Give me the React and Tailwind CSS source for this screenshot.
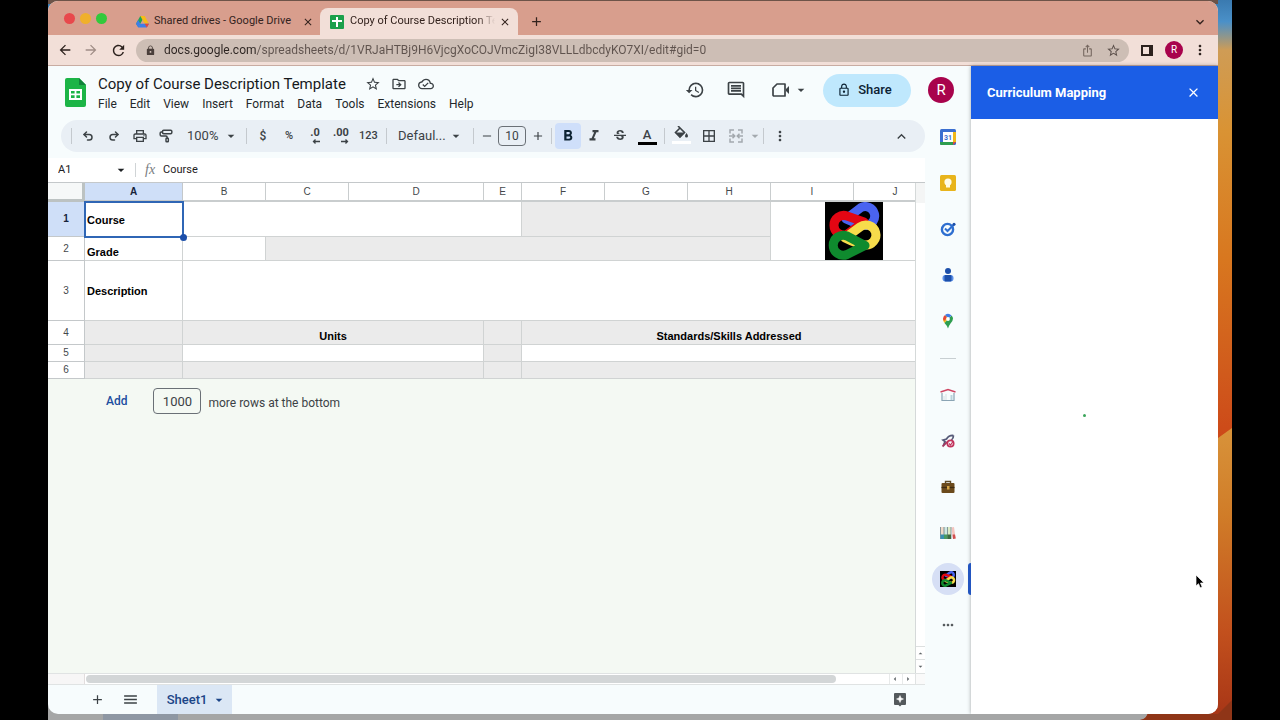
import React from 'react';
import {
    MdAdd, MdArrowBack, MdArrowDropDown, MdArrowForward, MdBorderAll, MdClose, MdFormatBold,
    MdFormatItalic, MdHistory, MdIosShare, MdKeyboardArrowDown, MdKeyboardArrowUp, MdLock, MdMenu,
    MdMoreHoriz, MdMoreVert, MdOutlineCloudDone, MdOutlineComment, MdOutlineDriveFileMove,
    MdOutlineLock, MdOutlinePrint, MdRefresh, MdRemove, MdStarBorder, MdStrikethroughS,
} from 'react-icons/md';
import { PaintRoller, Redo2, Undo2 } from 'lucide-react';

const menus = ['File', 'Edit', 'View', 'Insert', 'Format', 'Data', 'Tools', 'Extensions', 'Help'];

const columns = [
    { name: 'A', width: 'w-[98px]' },
    { name: 'B', width: 'w-[83px]' },
    { name: 'C', width: 'w-[83px]' },
    { name: 'D', width: 'w-[135px]' },
    { name: 'E', width: 'w-[38px]' },
    { name: 'F', width: 'w-[83px]' },
    { name: 'G', width: 'w-[83px]' },
    { name: 'H', width: 'w-[83px]' },
    { name: 'I', width: 'w-[83px]' },
    { name: 'J', width: 'w-[83px]' },
];

const Wallpaper = () => (
    <svg className="absolute inset-0 h-full w-full" viewBox="0 0 1184 720" preserveAspectRatio="none" aria-hidden="true">
        <defs>
            <linearGradient id="sky" x1="0" y1="0" x2="0" y2="1">
                <stop offset="0" stopColor="#3a7ab0" />
                <stop offset="0.03" stopColor="#4a90c8" />
                <stop offset="0.07" stopColor="#cf9c55" />
                <stop offset="0.18" stopColor="#d99334" />
                <stop offset="0.36" stopColor="#d8771f" />
                <stop offset="0.52" stopColor="#d05a1c" />
                <stop offset="0.62" stopColor="#cc4618" />
            </linearGradient>
            <linearGradient id="dune" x1="0" y1="0" x2="0" y2="1">
                <stop offset="0" stopColor="#d8933a" />
                <stop offset="0.3" stopColor="#d07c28" />
                <stop offset="0.7" stopColor="#c2501d" />
                <stop offset="1" stopColor="#a63416" />
            </linearGradient>
        </defs>
        <rect width="1184" height="720" fill="url(#sky)" />
        <path d="M0 430L1170 438L1184 428V720H0z" fill="url(#dune)" />
        <rect width="1170" height="4" fill="#6d5348" />
        <path d="M0 700H1100V711Q1099 720 1092 720H0z" fill="#a5a6a6" />
        <rect x="55" y="714" width="75" height="6" fill="#8e97a3" />
        <path d="M1100 714H1170L1184 700V720H1092Q1098 719 1100 714z" fill="#8f3517" />
    </svg>
);

// Four interlocking teardrops, drawn back to front
const LoopsLogo = ({ className }) => (
    <svg viewBox="0 0 58 58" className={className} role="img" aria-label="Curriculum Mapping logo">
        <rect width="58" height="58" fill="#000" />
        <g fill="none" strokeWidth="9" strokeLinejoin="round">
            <path d="M21 17L36 5.500A9.500 9.500 0 1 1 41 23.500Q36 24 21 17z" stroke="#4a63f0" />
            <path d="M39 20L22 14A9.800 9.800 0 1 0 22 32.500z" stroke="#e30613" />
            <path d="M20 36L35 25A10 10 0 1 1 40 43Q34 43 20 36z" stroke="#f7dc4b" />
            <path d="M40 43.500L22 34A10 10 0 1 0 22 52.500z" stroke="#0f8a2e" />
        </g>
    </svg>
);

const SheetsLogo = ({ className }) => (
    <svg viewBox="0 0 21 29" className={className} aria-hidden="true">
        <path d="M2 0H14L21 7V27Q21 29 19 29H2Q0 29 0 27V2Q0 0 2 0z" fill="#1cb446" />
        <path d="M14 0L21 7H14z" fill="#11823a" />
        <path d="M4 11H17V22H4zM6 13V15.500H9.600V13zM11.400 13V15.500H15V13zM6 17.300V20H9.600V17.300zM11.400 17.300V20H15V17.300z" fill="#fff" fillRule="evenodd" />
    </svg>
);

const SheetsFavicon = () => (
    <svg viewBox="0 0 14 14" className="size-[14px] shrink-0" aria-hidden="true">
        <rect width="14" height="14" rx="1" fill="#1ba04b" />
        <path d="M6 2H8V5H12V7H8V12H6V7H2V5H6z" fill="#fff" />
    </svg>
);

const DriveFavicon = () => (
    <svg viewBox="0 0 24 22" className="h-3 w-[13px] shrink-0" aria-hidden="true">
        <path d="M8 0H16L12 7L4.500 20.500L0 14z" fill="#22a25a" />
        <path d="M8 0H16L24 14H16z" fill="#f7bc16" />
        <path d="M8 14H24L20 21H4z" fill="#3f7de8" />
        <path d="M16 14H24L20 21z" fill="#e5483a" />
        <path d="M0 14L4 21L8 14L4 7.500z" fill="#3f7de8" />
    </svg>
);

const VideoIcon = () => (
    <svg viewBox="0 0 18 16" className="h-4 w-[18px]" fill="none" aria-hidden="true">
        <path d="M5 2H13V14H2Q1 14 1 13V6z" stroke="#3c4246" strokeWidth="1.700" strokeLinejoin="round" />
        <path d="M14 7L17 4V12L14 9z" fill="#3c4246" />
    </svg>
);

const FillIcon = () => (
    <svg viewBox="0 0 20 20" className="size-5" aria-hidden="true">
        <path d="M6 0L12.500 6.500L8 11L3.500 6.500L8 2" fill="none" stroke="#3c4246" strokeWidth="1.600" />
        <path d="M3.500 6.500H12.500L8 11z" fill="#3c4246" />
        <path d="M14.500 7Q16 9 16 10A1.500 1.500 0 0 1 13 10Q13 9 14.500 7z" fill="#3c4246" />
        <rect y="15" width="19" height="3" fill="#fff" />
    </svg>
);

const MergeIcon = () => (
    <svg viewBox="0 0 14 14" className="size-[14px]" fill="none" stroke="#a3a9ae" strokeWidth="1.500" aria-hidden="true">
        <path d="M5 1H1V4.500M9 1H13V4.500M5 13H1V9.500M9 13H13V9.500" />
        <path d="M0 7H5.500M3.500 4.800L5.700 7L3.500 9.200M14 7H8.500M10.500 4.800L8.300 7L10.500 9.200" />
    </svg>
);

// Decimal buttons share the digits, only the arrow direction changes
const DecimalIcon = ({ digits, right }) => (
    <span className="flex flex-col items-end">
        <span className="text-[11px] leading-[10px] font-bold">{digits}</span>
        <svg viewBox="0 0 8 5" className={right ? 'mt-px h-[5px] w-2 -scale-x-100' : 'mt-px h-[5px] w-2'} aria-hidden="true">
            <path d="M8 2.500H1.500M3.500 0.500L1.500 2.500L3.500 4.500" fill="none" stroke="#3c4246" strokeWidth="1.300" />
        </svg>
    </span>
);

const CalendarIcon = () => (
    <svg viewBox="0 0 16 16" className="size-4" aria-hidden="true">
        <rect width="16" height="16" rx="1.500" fill="#3b6fd0" />
        <rect x="13" y="3" width="3" height="10" fill="#efb81a" />
        <path d="M0 13H13V16H1.500Q0 16 0 14.500z" fill="#2f9e4f" />
        <path d="M13 13H16L13 16z" fill="#e04a3a" />
        <rect x="3" y="3" width="10" height="10" fill="#fff" />
        <text x="8" y="10.500" textAnchor="middle" fontSize="7" fontWeight="bold" fontFamily="Roboto, sans-serif" fill="#3b6fd0">31</text>
    </svg>
);

const KeepIcon = () => (
    <svg viewBox="0 0 16 16" className="size-4" aria-hidden="true">
        <rect width="16" height="16" rx="1.500" fill="#e8b41c" />
        <circle cx="8" cy="7" r="3.600" fill="#fffbe8" />
        <rect x="6" y="10" width="4" height="2.500" fill="#fffbe8" />
    </svg>
);

const TasksIcon = () => (
    <svg viewBox="0 0 16 16" className="size-4" fill="none" aria-hidden="true">
        <circle cx="7.500" cy="8.500" r="5.600" stroke="#2f6fd0" strokeWidth="2.400" />
        <path d="M5 7.500L7.500 10L14 3.500" stroke="#2f6fd0" strokeWidth="2" />
        <circle cx="14" cy="3.200" r="1.500" fill="#1c4faa" />
    </svg>
);

const ContactsIcon = () => (
    <svg viewBox="0 0 16 16" className="size-4" aria-hidden="true">
        <circle cx="8" cy="4" r="3" fill="#1c4faa" />
        <rect x="2.500" y="8" width="11" height="6.500" rx="3" fill="#5b8fe8" />
        <rect x="4.500" y="8" width="7" height="6.500" rx="1" fill="#1c4faa" />
    </svg>
);

const MapsIcon = () => (
    <svg viewBox="0 0 16 16" className="size-4" aria-hidden="true">
        <path d="M3 6Q3 8 4.500 10L10 4L6 2z" fill="#f2b81c" />
        <path d="M13 5.500Q13 8 10.500 10.500Q9 12.500 8 15.500Q7 12.500 4.500 10L11.500 2.500Q13 4 13 5.500z" fill="#2f9e4f" />
        <path d="M3 6A5 5 0 0 1 5 2L7 5L4 8z" fill="#e5483a" />
        <path d="M5 2A5 5 0 0 1 11.500 2.500L8.500 5.500z" fill="#3f7de8" />
        <circle cx="8" cy="6" r="1.900" fill="#fff" />
    </svg>
);

const ClassroomIcon = () => (
    <svg viewBox="0 0 16 16" className="size-4" fill="none" aria-hidden="true">
        <path d="M2 6V13.500H14V6" stroke="#8aa4b4" strokeWidth="1.200" />
        <path d="M6 13V7M4 13V9" stroke="#d8e0e4" />
        <path d="M0.500 5L8 2.500L15.500 5" stroke="#cf4562" strokeWidth="1.500" />
        <path d="M11.500 8V13" stroke="#b9d4dc" strokeWidth="2" />
    </svg>
);

const RocketIcon = () => (
    <svg viewBox="0 0 16 16" className="size-4" fill="none" aria-hidden="true">
        <path d="M13.500 2.500Q9 2 6.500 6L3 7L5 8.500L3.500 12M13.500 2.500Q13.500 5 11.500 7" stroke="#565a78" strokeWidth="1.700" />
        <path d="M2.500 13.500L7 9" stroke="#a03a62" strokeWidth="1.800" />
        <circle cx="10.500" cy="10.500" r="3.200" stroke="#c2335c" strokeWidth="1.700" />
        <path d="M9 10.500L10.500 12L13 8.500" stroke="#c2335c" strokeWidth="1.200" />
    </svg>
);

const BriefcaseIcon = () => (
    <svg viewBox="0 0 16 16" className="size-4" aria-hidden="true">
        <path d="M5.500 4V2.500H10.500V4" fill="none" stroke="#5f4a26" strokeWidth="1.400" />
        <rect x="1.500" y="4" width="13" height="10" rx="1" fill="#6b4a1c" />
        <path d="M1.500 8.500H14.500" stroke="#3e2a10" strokeWidth="1.200" />
        <rect x="7" y="7" width="2.500" height="3.500" fill="#d6a544" />
    </svg>
);

const BindersIcon = () => (
    <svg viewBox="0 0 16 16" className="size-4" aria-hidden="true">
        <rect x="0.500" y="2" width="3.500" height="12" fill="#f0d9c8" />
        <rect x="4" y="2" width="3.500" height="12" fill="#cfe8e2" />
        <rect x="7.500" y="2" width="3.500" height="12" fill="#dcebc4" />
        <path d="M11.500 2.500L14 2L15.700 13.500L13 14z" fill="#f4c4be" />
        <path d="M0.500 2V14M4 2V14M7.500 2V14M11 2V14" stroke="#6a7f88" strokeWidth="0.800" />
        <path d="M0.500 9.500H4V14H0.500z" fill="#3a8fb0" />
        <path d="M4 9.500H7.500V14H4z" fill="#4a9a60" />
        <path d="M7.500 9.500H11V14H7.500z" fill="#3d6a3f" />
        <path d="M12.500 9.500H15L15.700 13.500L13 14z" fill="#d05050" />
    </svg>
);

const ExploreIcon = () => (
    <svg viewBox="0 0 12 14" className="h-[14px] w-3" aria-hidden="true">
        <path d="M1 0H11Q12 0 12 1V11Q12 12 11 12H7.500L6 13.500L4.500 12H1Q0 12 0 11V1Q0 0 1 0z" fill="#54595c" />
        <path d="M6 2.500L7 5L9.500 6L7 7L6 9.500L5 7L2.500 6L5 5z" fill="#fff" stroke="#fff" strokeWidth="0.500" />
    </svg>
);

const googleApps = [
    { label: 'Calendar', icon: CalendarIcon },
    { label: 'Keep', icon: KeepIcon },
    { label: 'Tasks', icon: TasksIcon },
    { label: 'Contacts', icon: ContactsIcon },
    { label: 'Maps', icon: MapsIcon },
];

const addOns = [
    { label: 'Classroom', icon: ClassroomIcon },
    { label: 'Launch', icon: RocketIcon },
    { label: 'Briefcase', icon: BriefcaseIcon },
    { label: 'Binders', icon: BindersIcon },
];

const Tool = ({ label, className = 'w-[26px]', children }) => (
    <button type="button" aria-label={label} className={`flex h-[26px] shrink-0 items-center justify-center rounded ${className}`}>
        {children}
    </button>
);

const Divider = () => <span className="mx-[3px] h-4 w-px shrink-0 bg-[#c4c9ce]" />;

const BrowserTabs = () => (
    <div className="flex h-[34px] shrink-0 items-end bg-[#d89e8d] text-[11px] text-[#33221d]">
        <div className="flex h-[34px] w-[88px] items-center gap-[5px] pl-4">
            <span className="size-[11px] rounded-full bg-[#e8484c]" />
            <span className="size-[11px] rounded-full bg-[#f0b02c]" />
            <span className="size-[11px] rounded-full bg-[#32c93c]" />
        </div>
        <div className="flex h-[27px] w-[184px] items-center pr-[6px]">
            <DriveFavicon />
            <span className="ml-[5px] flex-1 truncate">Shared drives - Google Drive</span>
            <button type="button" aria-label="Close Shared drives tab"><MdClose size={12} /></button>
        </div>
        <div className="flex h-[27px] w-[198px] items-center rounded-t-lg bg-[#f2dfd8] pr-[7px] pl-[10px]">
            <SheetsFavicon />
            <span className="ml-[6px] flex-1 overflow-hidden whitespace-nowrap [mask-image:linear-gradient(to_right,#000_88%,transparent)]">
                Copy of Course Description Template
            </span>
            <button type="button" aria-label="Close Course Description tab" className="ml-1"><MdClose size={12} /></button>
        </div>
        <button type="button" aria-label="New tab" className="flex h-[27px] w-9 items-center justify-center"><MdAdd size={15} /></button>
        <button type="button" aria-label="Search tabs" className="mr-[10px] ml-auto flex h-[27px] items-center"><MdKeyboardArrowDown size={16} /></button>
    </div>
);

const AddressBar = () => (
    <div className="flex h-[31px] shrink-0 items-center border-b border-[#c8aca2] bg-[#f2dfd8] text-[#2c211d]">
        <button type="button" aria-label="Back" className="ml-[9px]"><MdArrowBack size={16} /></button>
        <button type="button" aria-label="Forward" className="ml-[10px] text-[#a08d86]"><MdArrowForward size={16} /></button>
        <button type="button" aria-label="Reload" className="ml-[11px]"><MdRefresh size={17} /></button>
        <label className="ml-[9px] flex h-[23px] flex-1 items-center gap-2 rounded-full bg-[#cdbeb5] pr-2 pl-[9px]">
            <MdLock size={11} className="text-[#4a3f3b]" />
            <input
                aria-label="Address"
                className="h-5 flex-1 bg-[linear-gradient(to_right,#2c2421_92px,#5f534e_92px)] bg-clip-text text-[12px] text-transparent outline-none"
                defaultValue="docs.google.com/spreadsheets/d/1VRJaHTBj9H6VjcgXoCOJVmcZigI38VLLLdbcdyKO7XI/edit#gid=0"
            />
            <MdIosShare size={13} className="text-[#75675f]" />
            <MdStarBorder size={15} className="ml-1 text-[#5c504b]" />
        </label>
        <button type="button" aria-label="Side panel" className="ml-3 h-[11px] w-3 border-2 border-r-4 border-[#2c211d]" />
        <button type="button" aria-label="Browser profile" className="ml-3 size-[18px] rounded-full bg-[#a8034c] text-[10px] leading-[18px] text-white">R</button>
        <button type="button" aria-label="Browser menu" className="mr-[10px] ml-[9px]"><MdMoreVert size={16} /></button>
    </div>
);

const DocHeader = () => (
    <header className="flex h-12 shrink-0 items-center pr-[17px] pl-[17px]">
        <SheetsLogo className="mt-[5px] h-[29px] w-[21px]" />
        <div className="ml-[5px] flex flex-col pt-[5px]">
            <div className="flex items-center text-[#3c4246]">
                <h1 className="pl-[7px] text-[15px] leading-[22px] text-[#16191c]">Copy of Course Description Template</h1>
                <button type="button" aria-label="Star" className="ml-[19px]"><MdStarBorder size={16} /></button>
                <button type="button" aria-label="Move" className="ml-[10px]"><MdOutlineDriveFileMove size={16} /></button>
                <button type="button" aria-label="Saved to Drive" className="ml-[11px]"><MdOutlineCloudDone size={16} /></button>
            </div>
            <nav className="flex text-[12px] leading-[18px] text-[#24282b]">
                {menus.map((menu) => (
                    <button key={menu} type="button" className="pr-[6px] pl-[7px]">{menu}</button>
                ))}
            </nav>
        </div>
        <div className="ml-auto flex items-center text-[#3c4246]">
            <button type="button" aria-label="Version history"><MdHistory size={20} /></button>
            <button type="button" aria-label="Comments" className="ml-[21px]"><MdOutlineComment size={20} /></button>
            <button type="button" aria-label="Meet" className="ml-[26px] flex items-center gap-[3px]">
                <VideoIcon />
                <MdArrowDropDown size={16} />
            </button>
            <button type="button" className="ml-[14px] flex h-[33px] w-[88px] items-center justify-center gap-[7px] rounded-full bg-[#bfe8fd] pr-[5px] text-[13px] font-medium text-[#0c2233]">
                <MdOutlineLock size={14} />
                Share
            </button>
            <button type="button" aria-label="Google account" className="ml-[17px] size-[26px] rounded-full bg-[#a8034c] text-[15px] text-white">R</button>
        </div>
    </header>
);

const Toolbar = () => (
    <div className="mt-[6px] ml-[13px] flex h-8 shrink-0 items-center rounded-full bg-[#e9eff5] pr-[11px] pl-[7px] text-[#3c4246]">
        <Divider />
        <Tool label="Undo"><Undo2 size={12} strokeWidth={3} /></Tool>
        <Tool label="Redo"><Redo2 size={12} strokeWidth={3} /></Tool>
        <Tool label="Print"><MdOutlinePrint size={16} /></Tool>
        <Tool label="Paint format"><PaintRoller size={14} strokeWidth={2.5} className="-scale-x-100" /></Tool>
        <label className="flex w-16 items-center pl-2">
            <select aria-label="Zoom" className="w-[36px] appearance-none text-[13px] outline-none">
                <option>100%</option>
            </select>
            <MdArrowDropDown size={16} />
        </label>
        <Divider />
        <Tool label="Currency"><span className="text-[12px] font-medium">$</span></Tool>
        <Tool label="Percent"><span className="text-[11px] font-medium">%</span></Tool>
        <Tool label="Decrease decimal places"><DecimalIcon digits=".0" /></Tool>
        <Tool label="Increase decimal places"><DecimalIcon digits=".00" right /></Tool>
        <Tool label="More formats" className="w-[29px]"><span className="text-[11px] font-medium">123</span></Tool>
        <Divider />
        <label className="flex w-20 items-center pl-2">
            <select aria-label="Font" className="w-[50px] appearance-none text-[13px] outline-none">
                <option>Defaul...</option>
            </select>
            <MdArrowDropDown size={16} />
        </label>
        <Divider />
        <Tool label="Decrease font size" className="w-5"><MdRemove size={14} /></Tool>
        <input aria-label="Font size" defaultValue="10" className="mx-px h-5 w-7 shrink-0 rounded border border-[#6a7076] text-center text-[12px] outline-none" />
        <Tool label="Increase font size" className="w-[21px]"><MdAdd size={14} /></Tool>
        <Divider />
        <Tool label="Bold" className="w-[26px] bg-[#cfdffa] text-[#0c2233]"><MdFormatBold size={18} /></Tool>
        <Tool label="Italic"><MdFormatItalic size={18} /></Tool>
        <Tool label="Strikethrough"><MdStrikethroughS size={16} /></Tool>
        <Tool label="Text color" className="w-7">
            <span className="w-[19px] border-b-3 border-black text-center text-[13px] leading-[14px] font-medium">A</span>
        </Tool>
        <Divider />
        <Tool label="Fill color" className="w-[27px]"><FillIcon /></Tool>
        <Tool label="Borders" className="w-[27px]"><MdBorderAll size={16} /></Tool>
        <Tool label="Merge cells" className="w-7"><MergeIcon /></Tool>
        <Tool label="Merge options" className="w-[10px] text-[#a3a9ae]"><MdArrowDropDown size={16} className="shrink-0" /></Tool>
        <Divider />
        <Tool label="More"><MdMoreVert size={16} /></Tool>
        <Tool label="Hide the menus" className="ml-auto w-[26px]"><MdKeyboardArrowUp size={17} /></Tool>
    </div>
);

const FormulaBar = () => (
    <div className="mt-[6px] flex h-[25px] shrink-0 items-center border-b border-[#c4c8ca] bg-white text-[11px] text-[#1d2023]">
        <input aria-label="Name box" defaultValue="A1" className="w-[65px] pl-[10px] outline-none" />
        <button type="button" aria-label="Named ranges"><MdArrowDropDown size={16} /></button>
        <span className="ml-[6px] h-[14px] w-px bg-[#d0d4d6]" />
        <label htmlFor="formula" className="ml-[9px] w-[14px] font-['Liberation_Serif',serif] text-[14px] leading-4 text-[#777c80] italic">fx</label>
        <input id="formula" defaultValue="Course" className="ml-1 flex-1 outline-none" />
    </div>
);

const Cell = ({ className = '', children, ...rest }) => (
    <td className={`border-r border-b border-[#d0d3d3] ${className}`} {...rest}>{children}</td>
);

const RowHead = ({ active, children }) => (
    <th
        scope="row"
        className={
            active
                ? 'border-r border-b border-[#c4c8ca] bg-[#cfdff8] text-[10px] font-bold text-[#16233a]'
                : 'border-r border-b border-[#c4c8ca] bg-white text-[10px] font-normal text-[#44484b]'
        }
    >
        {children}
    </th>
);

const Grid = () => (
    <table className="w-[889px] table-fixed border-separate border-spacing-0 bg-white font-['Liberation_Sans',Arial,sans-serif] text-[11px] leading-3">
        <thead>
            <tr className="h-[19px] text-[10px] text-[#44484b]">
                <th aria-label="Select all" className="w-[37px] border-r-3 border-b-3 border-[#bcc2c2] bg-[#f6f8f8]" />
                {columns.map((col) => (
                    <th
                        key={col.name}
                        scope="col"
                        className={
                            col.name === 'A'
                                ? `${col.width} border-r border-b-2 border-[#c4c8ca] bg-[#cfdff8] pt-px font-bold text-[#16233a]`
                                : `${col.width} border-r border-b-2 border-[#c9cdce] pt-px font-normal`
                        }
                    >
                        {col.name}
                    </th>
                ))}
            </tr>
        </thead>
        <tbody>
            <tr className="h-[35px]">
                <RowHead active>1</RowHead>
                <td className="relative pl-[2px] font-bold outline-2 -outline-offset-1 outline-[#2f66b5]">
                    Course
                    <span className="absolute -right-1 -bottom-1 size-[7px] rounded-full bg-[#1c4faa]" />
                </td>
                <Cell colSpan={4} />
                <Cell colSpan={3} className="bg-[#ebebeb]" />
                <Cell colSpan={2} rowSpan={2}>
                    <LoopsLogo className="mx-auto size-[58px]" />
                </Cell>
            </tr>
            <tr className="h-6">
                <RowHead>2</RowHead>
                <Cell className="pb-[2px] pl-[2px] align-bottom font-bold">Grade</Cell>
                <Cell />
                <Cell colSpan={6} className="bg-[#ebebeb]" />
            </tr>
            <tr className="h-[60px]">
                <RowHead>3</RowHead>
                <Cell className="pl-[2px] font-bold">Description</Cell>
                <Cell colSpan={9} />
            </tr>
            <tr className="h-6 bg-[#ebebeb]">
                <RowHead>4</RowHead>
                <Cell />
                <Cell colSpan={3} className="pb-[2px] text-center align-bottom font-bold">Units</Cell>
                <Cell />
                <Cell colSpan={5} className="pb-[2px] text-center align-bottom font-bold">Standards/Skills Addressed</Cell>
            </tr>
            <tr className="h-[17px]">
                <RowHead>5</RowHead>
                <Cell className="bg-[#ebebeb]" />
                <Cell colSpan={3} />
                <Cell className="bg-[#ebebeb]" />
                <Cell colSpan={5} />
            </tr>
            <tr className="h-[17px] bg-[#ebebeb]">
                <RowHead>6</RowHead>
                <Cell />
                <Cell colSpan={3} />
                <Cell />
                <Cell colSpan={5} />
            </tr>
        </tbody>
    </table>
);

const SheetArea = () => (
    <div className="flex min-h-0 flex-1 flex-col bg-white">
        <div className="flex min-h-0 flex-1">
            <div className="min-w-0 flex-1 overflow-hidden border-r border-[#d5d9d9] bg-[#f4f9f3]">
                <Grid />
                <div className="flex items-center pt-[9px] pl-[58px] text-[12px] text-[#3c4246]">
                    <button type="button" className="mr-[26px] font-medium text-[#1c4f9f]">Add</button>
                    <input
                        id="row-count"
                        defaultValue="1000"
                        className="h-[26px] w-12 rounded border border-[#6a7076] text-center text-[13px] outline-none"
                    />
                    <label htmlFor="row-count" className="ml-[7px] pt-1">more rows at the bottom</label>
                </div>
            </div>
            <div className="flex w-[9px] flex-col bg-white text-[#5f6568]">
                <span className="h-5 bg-[#f4f5f5]" />
                <button type="button" aria-label="Scroll up" className="mt-auto h-[13px] border-t border-[#dde0e0]">
                    <MdArrowDropDown size={9} className="rotate-180" />
                </button>
                <button type="button" aria-label="Scroll down" className="h-[14px] border-t border-[#dde0e0]">
                    <MdArrowDropDown size={9} />
                </button>
            </div>
        </div>
        <div className="flex h-3 shrink-0 items-center border-y border-[#e0e3e3] text-[#5f6568]">
            <span className="h-full w-[37px] border-r border-[#e2dddd] bg-[#f7f6f6]" />
            <span className="ml-px h-2 flex-1 rounded-full bg-[#d3d6d7]" />
            <button type="button" aria-label="Scroll left" className="ml-[53px] w-[13px] border-l border-[#e8eaea]">
                <MdArrowDropDown size={10} className="rotate-90" />
            </button>
            <button type="button" aria-label="Scroll right" className="w-[13px] border-l border-[#e8eaea]">
                <MdArrowDropDown size={10} className="-rotate-90" />
            </button>
            <span className="h-full w-[10px] border-l border-[#e0e3e3] bg-[#fafafa]" />
        </div>
    </div>
);

const SheetTabs = () => (
    <footer className="flex h-[29px] shrink-0 items-center text-[#3c4246]">
        <button type="button" aria-label="Add sheet" className="ml-[42px]"><MdAdd size={15} /></button>
        <button type="button" aria-label="All sheets" className="ml-[17px]"><MdMenu size={17} /></button>
        <button type="button" className="ml-[18px] flex h-full w-[75px] items-center justify-center gap-1 bg-[#dbe7f5] pl-[5px] text-[13px] font-medium text-[#1c4587]">
            Sheet1
            <MdArrowDropDown size={16} />
        </button>
        <button type="button" aria-label="Explore" className="mr-[19px] ml-auto"><ExploreIcon /></button>
    </footer>
);

const SideRail = () => (
    <aside className="relative flex w-[46px] shrink-0 flex-col items-center">
        {googleApps.map(({ label, icon: Icon }) => (
            <button key={label} type="button" aria-label={label} className="flex h-[46px] items-center"><Icon /></button>
        ))}
        <hr className="mt-[14px] mb-[13px] w-4 border-[#c8cfd2]" />
        {addOns.map(({ label, icon: Icon }) => (
            <button key={label} type="button" aria-label={label} className="flex h-[46px] items-center"><Icon /></button>
        ))}
        <div className="relative flex h-[46px] w-full items-center justify-center">
            <button type="button" aria-label="Curriculum Mapping" className="flex size-8 items-center justify-center rounded-full bg-[#d6dff5]">
                <LoopsLogo className="size-4" />
            </button>
            <span className="absolute top-[7px] right-0 h-8 w-[3px] rounded-l bg-[#2255c0]" />
        </div>
        <button type="button" aria-label="More add-ons" className="flex h-[46px] items-center text-[#54595c]"><MdMoreHoriz size={16} /></button>
    </aside>
);

const MappingPanel = () => (
    <section className="flex w-[247px] shrink-0 flex-col bg-white shadow-[0_0_4px_rgba(0,0,0,0.35)]">
        <div className="flex h-[53px] items-center justify-between bg-[#1b5ee6] pr-[17px] pl-4 text-white">
            <h2 className="text-[13px] font-bold">Curriculum Mapping</h2>
            <button type="button" aria-label="Close panel"><MdClose size={15} /></button>
        </div>
        <div className="flex flex-1 justify-center pt-[295px] pr-5">
            <span role="status" aria-label="Loading" className="size-[3px] rounded-full bg-[#3ba55a]" />
        </div>
    </section>
);

const App = () => (
    <div className="flex h-screen bg-black px-12 font-[Roboto,sans-serif]">
        <div className="relative flex-1 overflow-hidden pt-px pr-[14px] pb-[6px]">
            <Wallpaper />
            <main className="relative flex h-full flex-col overflow-hidden rounded-[10px] bg-[#f7fcfd]">
                <BrowserTabs />
                <AddressBar />
                <div className="flex min-h-0 flex-1">
                    <div className="flex min-w-0 flex-1 flex-col">
                        <DocHeader />
                        <div className="flex min-h-0 flex-1">
                            <div className="flex min-w-0 flex-1 flex-col">
                                <Toolbar />
                                <FormulaBar />
                                <SheetArea />
                                <SheetTabs />
                            </div>
                            <SideRail />
                        </div>
                    </div>
                    <MappingPanel />
                </div>
            </main>
            {/* mouse pointer */}
            <svg viewBox="0 0 10 15" className="absolute top-[574px] right-[27px] h-[15px] w-[10px]" aria-hidden="true">
                <path d="M1 1V12L3.500 9.700L5.200 13.800L7.200 13L5.500 9H9z" fill="#000" stroke="#fff" strokeWidth="0.700" />
            </svg>
        </div>
    </div>
);

export default App;
